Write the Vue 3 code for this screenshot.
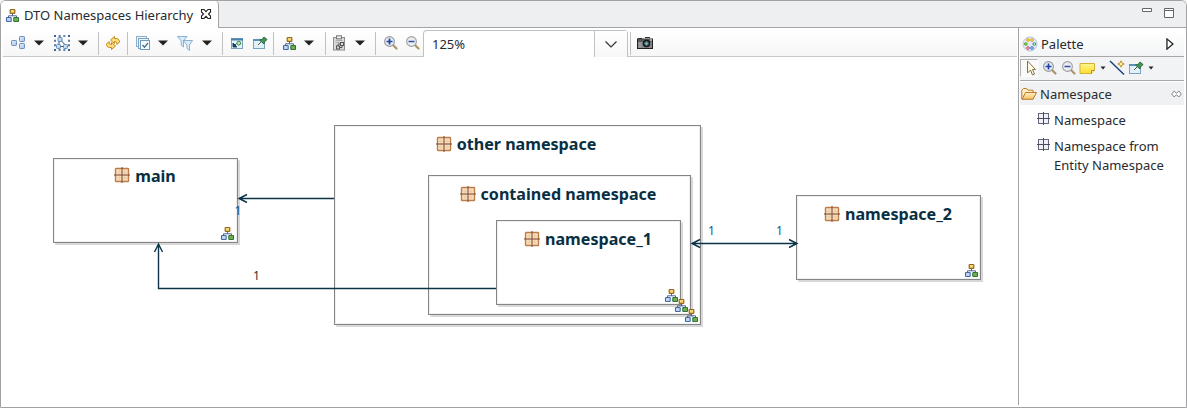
<script setup>
const tools = [
  'layout', 'caret', 'select', 'caret', 'sep', 'sync', 'sep', 'layers', 'caret', 'filter', 'caret', 'sep',
  'window', 'pinwin', 'sep', 'tree', 'caret', 'sep', 'paste', 'caret', 'sep', 'zoomin', 'zoomout', 'combo', 'sep', 'camera',
]
const nodes = [
  { name: 'other namespace', x: 334, y: 125, w: 367, h: 200 },
  { name: 'contained namespace', x: 428, y: 175, w: 263, h: 140 },
  { name: 'namespace_1', x: 496, y: 220, w: 185, h: 85 },
  { name: 'main', x: 53, y: 158, w: 185, h: 85 },
  { name: 'namespace_2', x: 796, y: 195, w: 185, h: 85 },
]
const px = (n) => n + 'px'
</script>

<template>
  <svg class="defs" width="0" height="0">
    <defs>
      <linearGradient id="blue" x1="0" y1="0" x2="1" y2="1"><stop offset="0" stop-color="#e6f1fc" /><stop offset="1" stop-color="#a2c3e6" /></linearGradient>
      <linearGradient id="folder" x1="0" y1="0" x2="0" y2="1"><stop offset="0" stop-color="#fff2c8" /><stop offset="1" stop-color="#f2bf62" /></linearGradient>
      <linearGradient id="note" x1="0" y1="0" x2="0" y2="1"><stop offset="0" stop-color="#fff58c" /><stop offset="1" stop-color="#ffdc30" /></linearGradient>
    </defs>
    <symbol id="tree" viewBox="0 0 16 16">
      <path d="M7.500 7v2M3.500 11V8.800h8V11" fill="none" stroke="#4c64a0" />
      <rect x="5.200" y="2.500" width="4.600" height="3.800" rx=".6" fill="#f5d777" stroke="#94681c" stroke-width="1.200" />
      <rect x="1.500" y="10.500" width="4.700" height="4" rx=".6" fill="#bdd6f2" stroke="#4667a4" stroke-width="1.100" />
      <rect x="8.800" y="10.500" width="4.700" height="4" rx=".6" fill="#6fb053" stroke="#327239" stroke-width="1.100" />
    </symbol>
    <symbol id="layout" viewBox="0 0 16 16">
      <g fill="url(#blue)" stroke="#718fb9"><rect x="1.500" y="5.500" width="5" height="5" rx=".7" /><rect x="9.500" y="1.500" width="5" height="5" rx=".7" /><rect x="9.500" y="8.500" width="5" height="5" rx=".7" /></g>
    </symbol>
    <symbol id="select" viewBox="0 0 16 16">
      <path d="M0 1h16M0 15h16M1 0v16M15 0v16" stroke="#2c5c90" stroke-width="1.600" stroke-dasharray="2 2.660" fill="none" />
      <path d="M6 4l6 7M5 6v5M5 11.500h7" stroke="#355a80" fill="none" />
      <g fill="url(#blue)" stroke="#6288b5"><rect x="4" y="2.500" width="4" height="4" rx="1" /><rect x="2.500" y="9.500" width="4" height="4" rx="1" /><rect x="9.500" y="9.500" width="4" height="4" rx="1" /></g>
    </symbol>
    <symbol id="sync" viewBox="0 0 16 16">
      <g fill="#ffdf80" stroke="#c0850f" stroke-width=".95" stroke-linejoin="round">
        <path d="M5.500 5L9.500 1.500V3.500Q14.500 3 14.500 7L12 9.500Q12.500 6.300 9.500 6.500V8.500Z" />
        <path d="M10.500 11L6.500 14.500V12.500Q1.500 13 1.500 9L4 6.500Q3.500 9.700 6.500 9.500V7.500Z" />
      </g>
    </symbol>
    <symbol id="layers" viewBox="0 0 16 16">
      <rect x="1.500" y="1.500" width="10" height="10" fill="#edf6fc" stroke="#8eafc9" /><rect x="3.500" y="3.500" width="10" height="10" fill="#edf6fc" stroke="#7ca2bf" /><rect x="5.500" y="5.500" width="9" height="9" fill="#f8fcff" stroke="#6e9abd" /><path d="M7.500 10l2 2.300L13 8" fill="none" stroke="#3e6d80" stroke-width="1.300" />
    </symbol>
    <symbol id="filter" viewBox="0 0 16 16">
      <g fill="#dcedfa" stroke="#7fa7cc" stroke-width=".9"><path d="M.5 1.500h9.500L6.500 6v6L4.200 10V6Z" /><path d="M6 5.500h9.500L12.500 10v5.500L10 13.500V10Z" /></g>
    </symbol>
    <symbol id="window" viewBox="0 0 16 16">
      <rect x="1.500" y="3.500" width="11" height="10" fill="#e2f3fb" stroke="#7c9fbe" /><path d="M1 4.500h12" stroke="#4582b0" stroke-width="2" /><path d="M3 8v4h4zM3.500 11.500l3-3" fill="#174267" stroke="#174267" /><circle cx="8.800" cy="8.200" r="1.900" fill="#c3e8b9" stroke="#388348" />
    </symbol>
    <symbol id="pinwin" viewBox="0 0 16 16">
      <rect x="1.500" y="4.500" width="11" height="9" fill="#e0f1f8" stroke="#7ba3c0" /><path d="M1 5h8" stroke="#5b93b8" stroke-width="2" /><path d="M6 10l3.500-3.500" stroke="#555" /><path d="M7.500 5l2.500-.5L12 2l3 2.500L12.500 7l-.5 2z" fill="#45955a" stroke="#2d6d3f" />
    </symbol>
    <symbol id="paste" viewBox="0 0 16 16">
      <rect x="1.500" y="2.500" width="11" height="12.500" fill="#dadada" stroke="#8d8d8d" /><rect x="4.500" y=".8" width="5" height="3" fill="#eee" stroke="#777" /><path d="M3.500 5.500h7M3.500 7.500h4" stroke="#aaa" /><rect x="8.500" y="7.500" width="3" height="3" fill="#ddd" stroke="#555" /><rect x="4.500" y="11" width="3" height="3" fill="#ddd" stroke="#555" /><path d="M6 11V9h2.500M8 12.500h2v-2" stroke="#555" fill="none" />
    </symbol>
    <symbol id="zoomin" viewBox="0 0 16 16">
      <path d="M10 10l3.500 3.500" stroke="#ac9468" stroke-width="2.200" stroke-linecap="round" /><circle cx="6.500" cy="6.500" r="4.900" fill="#e2edf8" stroke="#9b9a98" stroke-width="1.100" /><path d="M3.500 6.500h6M6.500 3.500v6" stroke="#2443a0" stroke-width="1.700" />
    </symbol>
    <symbol id="zoomout" viewBox="0 0 16 16">
      <path d="M10 10l3.500 3.500" stroke="#ac9468" stroke-width="2.200" stroke-linecap="round" /><circle cx="6.500" cy="6.500" r="4.900" fill="#e9edf4" stroke="#a3a099" stroke-width="1.100" /><path d="M3.500 6.500h6" stroke="#3850a0" stroke-width="1.700" />
    </symbol>
    <symbol id="camera" viewBox="0 0 16 16">
      <rect x=".5" y="4" width="15" height="9.500" fill="#858585" stroke="#222" /><path d="M1 3.500h4M8 2.500h5M1 6h14" stroke="#333" /><path d="M1.500 8h3M1.500 10h3M1.500 12h3" stroke="#aaa" /><circle cx="9.500" cy="8.500" r="3.400" fill="#333" stroke="#111" /><circle cx="9.500" cy="8.500" r="1.700" fill="#7bd088" stroke="#4165bd" /><path d="M13 5h2" stroke="#fff" />
    </symbol>
    <symbol id="package" viewBox="0 0 16 16">
      <rect x="1.500" y="1.500" width="13" height="13" rx=".6" fill="#f8dfbd" stroke="#bd7e4b" stroke-width="1.400" />
      <path d="M3 5.200h10M3 11h10M5.200 3v10M11 3v10" stroke="#ebc79d" stroke-width=".8" />
      <path d="M8 0v16M0 8h16" stroke="#7b4436" stroke-width="1" />
    </symbol>
    <symbol id="grid" viewBox="0 0 13 13">
      <rect x="1.500" y="1.500" width="10" height="10" fill="#f0f0f9" stroke="#66667a" /><path d="M6.500 0v13M0 6.500h13" stroke="#4b4b5c" />
    </symbol>
  </svg>

  <div class="window">
    <header class="tabs">
      <div class="tab">
        <svg class="i16"><use href="#tree" /></svg>
        <span>DTO Namespaces Hierarchy</span>
        <svg class="close" viewBox="0 0 12 12"><path d="M1.500 1.500H4L6 3.700 8 1.500h2.500V4L8.500 6l2 2v2.500H8L6 8.400 4 10.500H1.500V8l2-2-2-2Z" fill="#fff" stroke="#222" stroke-width="1.100" /></svg>
      </div>
      <svg class="minmax" viewBox="0 0 32 14"><path d="M.5 1.500h9v3h-9zM22.500 1.500h9v9h-9zM22.500 3.500h9" fill="#fff" stroke="#666" /></svg>
    </header>

    <div class="body">
      <main>
        <div class="toolbar">
          <template v-for="(t, i) in tools" :key="i">
            <svg v-if="t === 'caret'" class="caret" viewBox="0 0 10 6"><path d="M0 .5h10L5 5.500z" fill="#222" /></svg>
            <i v-else-if="t === 'sep'" class="sep"></i>
            <div v-else-if="t === 'combo'" class="combo">
              <span>125%</span>
              <div class="drop"><svg viewBox="0 0 12 7"><path d="M.5.5L6 6 11.500.5" fill="none" stroke="#333" stroke-width="1.200" /></svg></div>
            </div>
            <svg v-else class="i16"><use :href="'#' + t" /></svg>
          </template>
        </div>

        <section class="canvas">
          <div v-for="n in nodes" :key="n.name" class="node" :class="n.name" :style="{ left: px(n.x - 1), top: px(n.y - 58), width: px(n.w), height: px(n.h) }">
            <div class="title"><svg class="pkg"><use href="#package" /></svg><b>{{ n.name }}</b></div>
          </div>
          <svg class="links" width="1017" height="346" viewBox="1 58 1017 346">
            <g fill="none" stroke="#0b3448" stroke-width="1.400">
              <path d="M334 198.500H239M247 194.500l-8 4 8 4" />
              <path d="M496 288.500H158.500V244M154.500 252l4-8 4 8" />
              <path d="M692 243.500H797M700 239.500l-8 4 8 4M789 239.500l8 4-8 4" />
            </g>
            <svg v-for="n in [...nodes].reverse()" :key="n.name" :x="n.x + n.w - 18 + (n.name === 'main' ? 0 : 1)" :y="n.y + n.h - 18" width="16" height="16"><use href="#tree" /></svg>
            <g class="mult"><text x="234.500" y="215">1</text><text x="708" y="235">1</text><text x="776" y="235">1</text><text class="dark" x="253" y="280">1</text></g>
          </svg>
        </section>
      </main>

      <aside>
        <div class="phead">
          <svg class="i16" viewBox="0 0 16 16"><circle cx="8" cy="8" r="7" fill="#e1eafa" stroke="#b5c4e0" /><g stroke-width="1" fill="#fff"><circle cx="6" cy="4" r="1.300" stroke="#eaa400" fill="#ffe366" /><circle cx="10" cy="4" r="1.300" stroke="#d29900" /><circle cx="12.300" cy="8" r="1.300" stroke="#229039" /><circle cx="10" cy="12" r="1.300" stroke="#2664d0" /><circle cx="6" cy="12" r="1.300" stroke="#d03737" /><circle cx="3.800" cy="8" r="1.300" stroke="#55a51f" fill="#8bd34c" /></g></svg>
          <span>Palette</span>
          <svg class="tri" viewBox="0 0 7 11"><path d="M.7.8L6.200 5.500.7 10.200z" fill="#fff" stroke="#222" stroke-width="1.200" /></svg>
        </div>
        <div class="ptools">
          <div class="pressed"><svg class="i16" viewBox="0 0 16 16"><path d="M6.500 1v12l3-3 2 5 2-1-2-4.500H14.500z" fill="#fffbe5" stroke="#857646" /></svg></div>
          <svg class="i16"><use href="#zoomin" /></svg>
          <svg class="i16"><use href="#zoomout" /></svg>
          <svg class="i16" viewBox="0 0 16 16"><path d="M1 3.500h14.500v7l-3 3H1z" fill="url(#note)" stroke="#d1b03a" /><path d="M12.500 13.500v-3h3" fill="#fff4ae" stroke="#b58c20" /></svg>
          <svg class="mini" viewBox="0 0 6 4"><path d="M.5.500h5L3 3.500z" fill="#222" /></svg>
          <svg class="i16" viewBox="0 0 16 16"><path d="M1 1l14 13.500" stroke="#173f79" stroke-width="1.400" /><path d="M12 .8l1 2.200 2.200 1-2.200 1-1 2.200L11 5 8.800 4 11 3z" fill="#fff4b5" stroke="#bd8615" stroke-width=".9" /></svg>
          <svg class="i16"><use href="#pinwin" /></svg>
          <svg class="mini" viewBox="0 0 6 4"><path d="M.5.500h5L3 3.500z" fill="#222" /></svg>
        </div>
        <div class="drawer">
          <svg class="i16" viewBox="0 0 16 16"><path d="M.8 13V4.200L2.500 2.500h3L7 4.200h5v2.500" fill="#fff0c8" stroke="#bd7828" /><path d="M1 13.300l3.500-6.800h11L12 13.300z" fill="url(#folder)" stroke="#bd7828" /></svg>
          <span>Namespace</span>
          <svg class="pin" viewBox="0 0 11 8"><path d="M3.200 1L.7 4l2.500 3L5.500 4.700 7.800 7l2.500-3L7.800 1 5.500 3.300z" fill="#fff" stroke="#777" stroke-width=".9" /></svg>
        </div>
        <div class="entry"><svg class="grid"><use href="#grid" /></svg><span>Namespace</span></div>
        <div class="entry"><svg class="grid"><use href="#grid" /></svg><span>Namespace from<br>Entity Namespace</span></div>
      </aside>
    </div>
  </div>
</template>

<style>
body { background: #f2f2f2; }
</style>
<style scoped>
* { box-sizing: border-box; }
.defs { position: absolute; }
svg { display: block; flex: none; }
.i16 { width: 16px; height: 16px; }
.window { width: 1187px; height: 408px; border: 1px solid #a2a2a4; border-radius: 6px 6px 0 0; background: #fff; font: 13px/19px "Noto Sans", sans-serif; color: #272b30; overflow: hidden; display: flex; flex-direction: column; }
.tabs { height: 27px; flex: none; display: flex; justify-content: space-between; background: #eeeff1; border-bottom: 1px solid #a2a4a7; }
.tab { width: 218px; height: 27px; background: #fff; border-right: 1px solid #a2a4a7; border-radius: 0 4px 0 0; display: flex; align-items: center; padding: 0 0 0 4px; white-space: nowrap; }
.tab span { width: 179px; padding-left: 3px; letter-spacing: -0.020px; padding-top: 1px; }
.close { width: 12px; height: 12px; margin-top: -2px; }
.minmax { width: 32px; height: 14px; margin: 6px 12px 0 0; }
.body { flex: 1; min-height: 0; display: grid; grid-template-columns: 1017px 167px; }
main { display: flex; flex-direction: column; padding-top: 2px; }
.toolbar { height: 27px; margin: 0 1px 1px 2px; padding-left: 7px; border-bottom: 1px solid #c5c7c9; background: linear-gradient(#fff, #f6f6f7); display: grid; align-items: center; grid-template-columns: 25px 19px 25px 19px 7px 22px 8px 24px 18px 26px 19px 8px 22px 21px 9px 23px 20px 7px 24px 19px 8px 22px 18px 207px 7px 16px; }
.toolbar > .i16, .toolbar > .caret { margin-bottom: 1px; }
.toolbar > .caret { margin-left: -1px; }
.caret { width: 10px; height: 6px; }
.sep { width: 1px; height: 23px; background: #bfc1c3; }
.combo { width: 205px; height: 27px; border: 1px solid #bfc1c3; border-bottom: 0; border-radius: 4px 4px 0 0; background: #fff; display: flex; align-items: center; justify-content: space-between; padding-left: 8px; }
.drop { width: 33px; height: 26px; border-left: 1px solid #bfc1c3; display: grid; place-items: center; background: linear-gradient(#fff, #f7f7f7); }
.drop svg { width: 12px; height: 7px; }
.canvas { position: relative; flex: 1; }
.node { position: absolute; border: 1px solid #858585; background: #fff; box-shadow: inset 0 0 0 1px #f0f0f0, 3px 3px 0 -1px #d8d8d8, 2px 2px 0 #dedede; }
.title { display: flex; justify-content: center; align-items: center; gap: 5px; padding: 7px 3px 0 0; height: 29px; color: #092f43; font-size: 16.100px; line-height: 22px; }
.main .title { padding: 5px 1px 0 0; height: 28px; }
.namespace_1 .title, .namespace_2 .title { padding-right: 1px; }
.pkg { width: 16px; height: 16px; margin-top: -1px; }
.links { position: absolute; left: 0; top: 0; }
.mult { font-size: 12px; fill: #155784; }
.mult .dark { fill: #303236; }
aside { height: 377px; border-left: 1px solid #a3a3a3; padding: 3px 1px 0 1px; }
.phead { height: 25px; display: flex; align-items: center; padding-left: 2px; background: linear-gradient(#fff, #f3f4f5); }
.phead span { flex: 1; padding: 1px 0 0 3px; }
.tri { width: 8px; height: 12px; margin-right: 10px; }
.ptools { height: 25px; border-top: 1px solid #a7a7a7; border-bottom: 1px solid #a7a7a7; background: #f2f3f4; display: grid; grid-template-columns: 22px 19px 18px 21px 9px 19px 20px 6px; align-items: center; padding-bottom: 1px; }
.pressed { width: 18px; height: 18px; border: 1px solid #b1b2b4; border-right-color: #fff; border-bottom-color: #fff; background: #f9f9f9; }
.mini { width: 6px; height: 4px; }
.drawer { height: 23px; margin: 1px 0 3px; background: #f0f1f3; display: flex; align-items: center; padding: 1px 0 0 1px; }
.drawer span { flex: 1; padding-left: 3px; }
.pin { width: 11px; height: 8px; margin-right: 2px; }
.entry { display: flex; gap: 4px; padding: 3px 0 4px 17px; white-space: nowrap; }
.grid { width: 13px; height: 13px; margin-top: 1px; }
</style>
